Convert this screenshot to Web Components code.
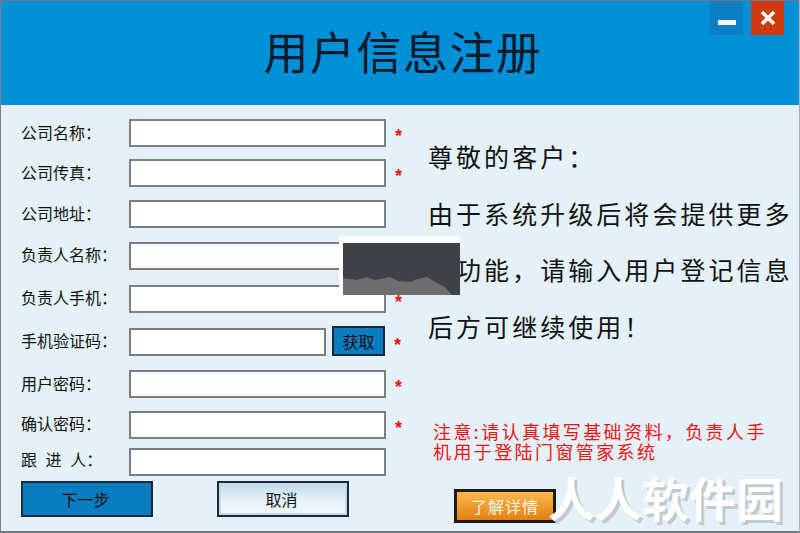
<!DOCTYPE html>
<html lang="zh">
<head>
<meta charset="utf-8">
<style>
  html, body { margin: 0; padding: 0; background: #e4f1f8; }
  body { font-family: "Noto Sans CJK SC", "Liberation Sans", sans-serif; }
</style>
</head>
<body>
<reg-window>
  <form-row slot="form" label="公司名称：" required style="--gap:0px"></form-row>
  <form-row slot="form" label="公司传真：" required style="--gap:12px"></form-row>
  <form-row slot="form" label="公司地址：" style="--gap:13px"></form-row>
  <form-row slot="form" label="负责人名称：" style="--gap:14px;--ly:-2px"></form-row>
  <form-row slot="form" label="负责人手机：" required style="--gap:15px;--ly:-2px"></form-row>
  <form-row slot="form" label="手机验证码：" required code style="--gap:15px;--ly:-2px"></form-row>
  <form-row slot="form" label="用户密码：" required style="--gap:14px"></form-row>
  <form-row slot="form" label="确认密码：" required style="--gap:13px;--ly:-2px"></form-row>
  <form-row slot="form" label="跟 进 人：" style="--gap:9px;--ly:-3px"></form-row>
  <reg-button slot="actions" kind="blue">下一步</reg-button>
  <reg-button slot="actions" kind="light">取消</reg-button>
</reg-window>

<script>
class RegButton extends HTMLElement {
  constructor() {
    super();
    this.attachShadow({ mode: 'open' });
  }
  connectedCallback() {
    this.shadowRoot.innerHTML = `
      <style>
        :host { display: block; width: 132px; height: 36px; }
        button {
          width: 100%; height: 100%; margin: 0; padding: 0 3px 0 0;
          border: 2px solid #1a2a38;
          font: 16px "Noto Sans CJK SC", sans-serif;
          color: #111;
        }
        :host([kind=blue]) button { background: #0a7cc0; }
        :host([kind=light]) button {
          background: linear-gradient(#bcdbe8, #e6f2f8 55%, #f2f9fc);
          box-shadow: inset 0 0 0 2px #c4dae6;
        }
        :host([kind=orange]) { width: 102px; height: 34px; }
        :host([kind=orange]) button {
          background: linear-gradient(#f9b94c, #e27f14);
          border: 3px solid #1d1a14;
          padding: 0;
          color: #fff8e8;
          letter-spacing: 1px;
        }
      </style>
      <button type="button"><slot></slot></button>
    `;
  }
}

class FormRow extends HTMLElement {
  constructor() {
    super();
    this.attachShadow({ mode: 'open' });
  }
  connectedCallback() {
    const star = this.hasAttribute('required') ? '*' : '';
    const code = this.hasAttribute('code');
    this.shadowRoot.innerHTML = `
      <style>
        :host { display: flex; align-items: center; height: 28px; margin-top: var(--gap, 0); }
        label { width: 108px; font-size: 16px; word-spacing: 5px; color: #111; white-space: pre; line-height: 28px; position: relative; top: var(--ly, -1px); }
        input {
          box-sizing: border-box; width: 257px; height: 28px; margin: 0; padding: 0 4px;
          border: 2px solid #7b7f80; background: #fff; outline: none;
        }
        input.short { width: 197px; }
        .get { width: 53px; height: 30px; margin: -2px 0 0 6px; box-sizing: border-box; background: #0a7cc0;
          border: 2px solid #17293a; padding: 0; font: 16px "Noto Sans CJK SC", sans-serif; color: #111; }
        .star { margin-left: 9px; width: 10px; color: #f01010; font: bold 18px "Liberation Sans", sans-serif; line-height: 18px; position: relative; top: 3px; }
        .get + .star { margin-left: 9px; }
      </style>
      <label>${this.getAttribute('label')}</label>
      <input type="text" class="${code ? 'short' : ''}">
      ${code ? '<button type="button" class="get">获取</button>' : ''}
      <span class="star">${star}</span>
    `;
  }
}

class RegWindow extends HTMLElement {
  constructor() {
    super();
    this.attachShadow({ mode: 'open' });
  }
  connectedCallback() {
    this.shadowRoot.innerHTML = `
      <style>
        :host {
          display: block; position: relative; box-sizing: border-box;
          width: 800px; height: 533px; overflow: hidden;
          background: #e4f1f8;
          border-left: 1px solid #7c8287; border-bottom: 2px solid #70767a;
          border-right: 1px solid #a8b4bb;
        }
        header {
          height: 105px; background: #0090d8; border-top: 1px solid #6b7c88; box-sizing: border-box;
          display: flex; justify-content: center; align-items: center;
        }
        h1 { margin: 0 0 6px 6px; font-size: 45px; font-weight: 400; letter-spacing: 1.5px; color: #0a1a2a; }
        .ctrl { position: absolute; top: 1px; right: 0; display: flex; gap: 8px; padding-right: 15px; }
        .ctrl span { width: 33px; height: 34px; display: flex; align-items: center; justify-content: center; }
        .min { background: #0a7fc6; }
        .min svg { margin-top: 7px; }
        .close { background: #d03a10; }
        main { display: flex; }
        .left { width: 406px; padding: 14px 0 0 20px; box-sizing: border-box; }
        .actions { display: flex; gap: 64px; margin-top: 5px; }
        .right { flex: 1; padding-left: 21px; color: #111; }
        .msg p { margin: 0; font-size: 25px; letter-spacing: 3.05px; line-height: 56.5px; white-space: nowrap; }
        .msg p.in { margin-left: 28px; }
        .msg { padding-top: 23px; height: 316px; box-sizing: border-box; }
        .note { margin: 0 0 0 5px; width: 340px; font-size: 18px; line-height: 20px; color: #f01010; letter-spacing: 2.4px; }
        .more { margin: 28px 0 0 26px; }
        .patch {
          position: absolute; left: 338px; top: 236px; width: 121px; height: 59px;
          background: #fff; box-sizing: border-box; padding: 7px 0 0 4px;
        }
        .patch svg { display: block; }
        .mark {
          position: absolute; right: 16px; bottom: 0; font-size: 47px; font-weight: 700; color: #fff;
          letter-spacing: 0; text-shadow: 3px 3px 0 #c4c9cc; white-space: nowrap;
        }
      </style>
      <header>
        <h1>用户信息注册</h1>
        <div class="ctrl">
          <span class="min"><svg width="18" height="6" viewBox="0 0 18 6"><rect width="18" height="5" y="1" fill="#fff"/></svg></span>
          <span class="close"><svg width="16" height="16" viewBox="0 0 16 16"><path d="M2 2l12 12M14 2L2 14" stroke="#fff" stroke-width="3.6" fill="none"/></svg></span>
        </div>
      </header>
      <main>
        <section class="left">
          <slot name="form"></slot>
          <div class="actions"><slot name="actions"></slot></div>
        </section>
        <section class="right">
          <div class="msg">
            <p>尊敬的客户：</p>
            <p>由于系统升级后将会提供更多</p>
            <p class="in">功能，请输入用户登记信息</p>
            <p>后方可继续使用！</p>
          </div>
          <p class="note">注意:请认真填写基础资料，负责人手机用于登陆门窗管家系统</p>
          <div class="more"><reg-button kind="orange">了解详情</reg-button></div>
        </section>
      </main>
      <div class="patch">
        <svg width="117" height="52" viewBox="0 0 117 52">
          <rect width="117" height="52" fill="#3e4148"/>
          <path d="M0 35l14 2 10-3 8 3 15-3 8 4 12 1 8-3 9-2 10 6 8 4 7 8H0z" fill="#6e6e6e"/>
        </svg>
      </div>
      <div class="mark">人人软件园</div>
    `;
  }
}

customElements.define('reg-button', RegButton);
customElements.define('form-row', FormRow);
customElements.define('reg-window', RegWindow);
</script>
</body>
</html>
